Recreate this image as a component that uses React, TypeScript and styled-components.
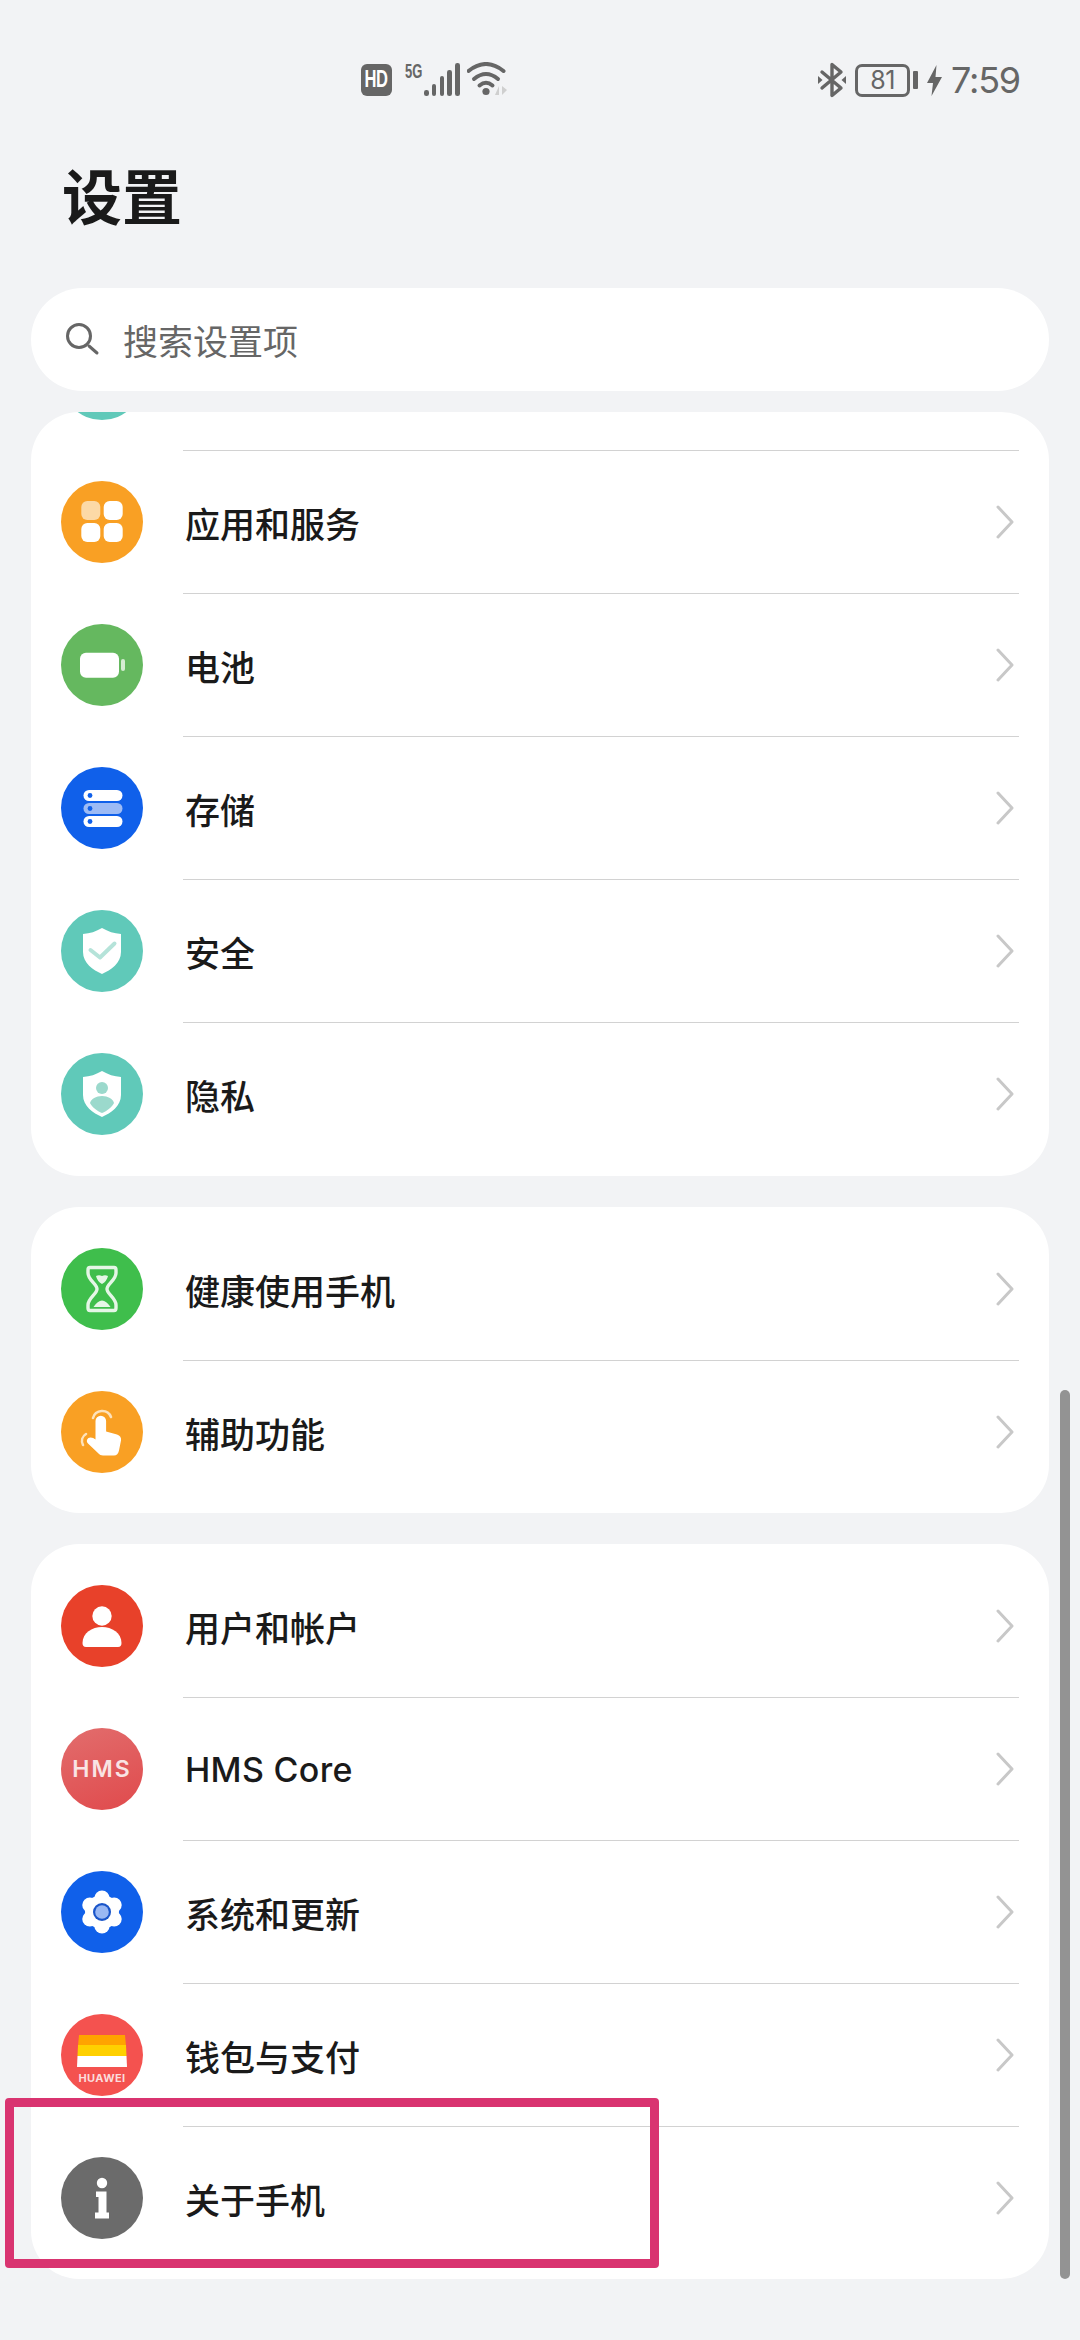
import type { ReactNode } from "react";
import styled, { createGlobalStyle } from "styled-components";

const GlobalStyle = createGlobalStyle`
  html, body {
    margin: 0;
    padding: 0;
    background: #f2f3f5;
  }
  * {
    box-sizing: border-box;
  }
`;

const FONT = `"Noto Sans CJK SC", "Noto Sans", sans-serif`;
const STATUS_GRAY = "#666666";

const Page = styled.div`
  position: relative;
  width: 1080px;
  height: 2340px;
  padding: 0 31px;
  overflow: hidden;
  background: #f2f3f5;
  font-family: ${FONT};
`;

const StatusBar = styled.div`
  display: flex;
  justify-content: space-between;
  align-items: flex-start;
  height: 98px;
  padding: 62px 29px 0 330px;
`;

const StatusGroup = styled.div`
  display: flex;
  align-items: center;
`;

const HdBadge = styled.div`
  display: flex;
  align-items: center;
  justify-content: center;
  width: 31px;
  height: 32px;
  margin-top: 1px;
  border-radius: 6px;
  background: ${STATUS_GRAY};
  color: #ffffff;
  font: 700 23px "Liberation Sans", sans-serif;
`;

const HdText = styled.span`
  transform: scaleX(0.72);
  letter-spacing: -0.5px;
`;

const NetworkLabel = styled.span`
  display: block;
  align-self: flex-start;
  width: 17px;
  margin: 0 2px 0 13px;
  color: ${STATUS_GRAY};
  font: 700 21px/17px "Liberation Sans", sans-serif;
  transform: scaleX(0.62);
  transform-origin: left center;
  white-space: nowrap;
`;

const SignalBars = styled.div`
  display: flex;
  align-items: flex-end;
  gap: 3.2px;
  height: 33px;
  margin-right: 7px;
`;

const SignalBar = styled.i<{ $height: number }>`
  display: block;
  width: 4.6px;
  height: ${({ $height }) => $height}px;
  border-radius: 2.3px;
  background: ${STATUS_GRAY};
`;

const RightGroup = styled(StatusGroup)`
  gap: 9px;
  height: 36px;
`;

const BatteryWrap = styled.div`
  display: flex;
  align-items: center;
  gap: 3px;
`;

const BatteryBody = styled.div`
  display: flex;
  align-items: center;
  justify-content: center;
  width: 55px;
  height: 33px;
  border: 3px solid ${STATUS_GRAY};
  border-radius: 7px;
  color: ${STATUS_GRAY};
  font: 400 25px/1 "Inter", sans-serif;
  letter-spacing: -0.5px;
`;

const BatteryNub = styled.i`
  display: block;
  width: 5px;
  height: 18px;
  border-radius: 1px;
  background: ${STATUS_GRAY};
`;

const Clock = styled.span`
  color: ${STATUS_GRAY};
  font: 400 36px/36px "Inter", sans-serif;
  letter-spacing: -1.2px;
`;

const Title = styled.h1`
  margin: 56px 0 54px;
  padding-left: 31px;
  color: #1a1a1a;
  font-size: 60px;
  font-weight: 700;
  line-height: 80px;
`;

const SearchBar = styled.div`
  display: flex;
  align-items: center;
  gap: 22px;
  height: 103px;
  padding-left: 34px;
  border-radius: 52px;
  background: #ffffff;
  color: #666666;
  font-size: 35px;
  line-height: 100px;
`;

const CardList = styled.div`
  display: flex;
  flex-direction: column;
  gap: 31px;
  margin-top: 21px;
`;

const Card = styled.section`
  padding: 11px 0 9px;
  border-radius: 48px;
  background: #ffffff;
  overflow: hidden;
`;

const ScrolledCard = styled(Card)`
  padding: 0 0 10px;
`;

const Row = styled.div`
  display: flex;
  height: 143px;
  padding: 0 30px;
`;

const ScrolledOffRow = styled(Row)`
  margin-top: -104px;
`;

const RowBody = styled.div<{ $last?: boolean }>`
  flex: 1;
  display: flex;
  align-items: center;
  justify-content: space-between;
  margin-left: 40px;
  padding: 0 5px 0 2px;
  border-bottom: 1px solid ${({ $last }) => ($last ? "transparent" : "#d2d2d2")};
`;

const RowLabel = styled.span`
  color: #1a1a1a;
  font-size: 35px;
  font-weight: 500;
`;

const LatinLabel = styled(RowLabel)`
  font-family: "Inter", sans-serif;
  font-size: 34px;
  letter-spacing: 0.3px;
`;

const IconCircle = styled.div<{ $bg: string }>`
  flex: none;
  display: flex;
  align-items: center;
  justify-content: center;
  align-self: center;
  width: 82px;
  height: 82px;
  margin-top: -1px;
  border-radius: 50%;
  background: ${({ $bg }) => $bg};
  overflow: hidden;
`;

const HmsMark = styled.span`
  color: #f9e4e4;
  font: 600 23px "Inter", sans-serif;
  letter-spacing: 2px;
`;

const ScrollThumb = styled.div`
  position: absolute;
  left: 1060px;
  top: 1390px;
  width: 10px;
  height: 889px;
  border-radius: 5px;
  background: #939393;
`;

const Highlight = styled.div`
  position: absolute;
  left: 5px;
  top: 2098px;
  width: 654px;
  height: 170px;
  border: 9.5px solid #d93470;
  border-radius: 4px;
`;

const Chevron = () => (
  <svg width="18" height="34" viewBox="0 0 18 34" fill="none">
    <path d="M2 2 L16 17 L2 32" stroke="#c8c8c8" strokeWidth="3" strokeLinecap="round" strokeLinejoin="round" />
  </svg>
);

const Glyph = ({ children }: { children: ReactNode }) => (
  <svg width="82" height="82" viewBox="0 0 82 82" fill="none">
    {children}
  </svg>
);

const shieldPath =
  "M41 18 C47 21.5 53 23.5 60 24 V42 C60 53 50 60 41 64 C32 60 22 53 22 42 V24 C29 23.5 35 21.5 41 18 Z";

const gearLobes = [0, 60, 120, 180, 240, 300];

const icons: Record<string, ReactNode> = {
  apps: (
    <Glyph>
      <rect x="20.3" y="20" width="19" height="19" rx="6" fill="#fcd9a6" />
      <rect x="42.7" y="20" width="19" height="19" rx="6" fill="#fff" />
      <rect x="20.3" y="42" width="19" height="19" rx="6" fill="#fff" />
      <rect x="42.7" y="42" width="19" height="19" rx="6" fill="#fff" />
    </Glyph>
  ),
  battery: (
    <Glyph>
      <rect x="19" y="28.7" width="39" height="25" rx="6" fill="#fff" />
      <rect x="60" y="35" width="4" height="12" rx="2" fill="#d5ecd2" />
    </Glyph>
  ),
  storage: (
    <Glyph>
      <rect x="22.5" y="23" width="39" height="11" rx="5.5" fill="#fff" />
      <rect x="22.5" y="36" width="39" height="11" rx="5.5" fill="#9dbbf5" />
      <rect x="22.5" y="49" width="39" height="11" rx="5.5" fill="#fff" />
      <circle cx="29" cy="28.5" r="2.4" fill="#1060ea" />
      <circle cx="29" cy="41.5" r="2.4" fill="#1060ea" />
      <circle cx="29" cy="54.5" r="2.4" fill="#1060ea" />
    </Glyph>
  ),
  security: (
    <Glyph>
      <path d={shieldPath} fill="#fff" />
      <path d="M29.5 40 L39 47.5 L53.5 33.5" stroke="#b5e3d9" strokeWidth="4" strokeLinecap="round" strokeLinejoin="round" />
    </Glyph>
  ),
  privacy: (
    <Glyph>
      <path d={shieldPath} fill="#fff" />
      <circle cx="41" cy="35" r="6" fill="#9bd9cc" />
      <path d="M41 43 C35 43 30 46 29 50 C31 54 36 58 41 60 C46 58 51 54 53 50 C52 46 47 43 41 43 Z" fill="#9bd9cc" />
    </Glyph>
  ),
  hourglass: (
    <Glyph>
      <path
        d="M29 19.5 H53 Q55 19.5 55 22 V25 C55 32 46 36 46 41 C46 46 55 50 55 57 V60 Q55 62.5 53 62.5 H29 Q27 62.5 27 60 V57 C27 50 36 46 36 41 C36 36 27 32 27 25 V22 Q27 19.5 29 19.5 Z"
        stroke="#e5f6e6"
        strokeWidth="3.4"
      />
      <path d="M35 28 Q38 26.5 41 28 Q44 26.5 47 28 Q46 33 41 36 Q36 33 35 28 Z" fill="#e5f6e6" />
      <path d="M32.5 59 Q41 46 49.5 59 Z" fill="#e5f6e6" />
    </Glyph>
  ),
  touch: (
    <Glyph>
      <path
        d="M34.5 30 a5.3 5.3 0 0 1 10.6 0 V40.5 L56 43.5 c3 1 4.5 3 4 6 l-2 10 c-.5 3 -2.5 5 -5 5 H42 c-2 0 -3.5 -1 -4.5 -2 L27 52.5 c-2.5 -2.5 -.5 -6 2.5 -6 c2 0 3.5 .8 5 2 Z"
        fill="#fff"
      />
      <path d="M32 27 a9.5 9.5 0 0 1 18 -1" stroke="#fde2bb" strokeWidth="2.6" strokeLinecap="round" />
      <path d="M25 43 c-4 2.5 -5 7 -3 11" stroke="#fde2bb" strokeWidth="2.6" strokeLinecap="round" />
    </Glyph>
  ),
  user: (
    <Glyph>
      <circle cx="41" cy="31" r="9.7" fill="#fff" />
      <path d="M21.5 58 C21.5 48 31 42 41 42 C51 42 60.5 48 60.5 58 Q60.5 62 57 62 H25 Q21.5 62 21.5 58 Z" fill="#fff" />
    </Glyph>
  ),
  hms: <HmsMark>HMS</HmsMark>,
  gear: (
    <Glyph>
      {gearLobes.map((deg) => (
        <circle
          key={deg}
          cx={41 + 14 * Math.sin((deg * Math.PI) / 180)}
          cy={41 - 14 * Math.cos((deg * Math.PI) / 180)}
          r="7.6"
          fill="#fff"
        />
      ))}
      <circle cx="41" cy="41" r="17" fill="#fff" />
      <circle cx="41" cy="41" r="9" fill="#1a55c9" />
      <circle cx="41" cy="41" r="6.8" fill="#9ab8f3" />
    </Glyph>
  ),
  wallet: (
    <Glyph>
      <path d="M18 21 H64 L65 32 H17 Z" fill="#ffa300" />
      <path d="M17 31 H65 L65.5 42 H16.5 Z" fill="#ffd000" />
      <path d="M16.5 42 H65.5 L66 53 H16 Z" fill="#fff" />
      <text
        x="41"
        y="68"
        textAnchor="middle"
        fill="#fbdcdc"
        fontFamily="Inter, sans-serif"
        fontSize="11"
        fontWeight="700"
        letterSpacing="0.4"
      >
        HUAWEI
      </text>
    </Glyph>
  ),
  info: (
    <Glyph>
      <circle cx="41" cy="26" r="5.2" fill="#fff" />
      <path d="M35 34.5 H45.5 V55.5 H48 V61.5 H34 V55.5 H37.5 V40 H35 Z" fill="#fff" />
    </Glyph>
  ),
};

type Item = { label: string; icon: string; bg: string; latin?: boolean };

const firstCard: Item[] = [
  { label: "应用和服务", icon: "apps", bg: "#f9a024" },
  { label: "电池", icon: "battery", bg: "#65b85f" },
  { label: "存储", icon: "storage", bg: "#1060ea" },
  { label: "安全", icon: "security", bg: "#60c9b9" },
  { label: "隐私", icon: "privacy", bg: "#60c9b9" },
];

const secondCard: Item[] = [
  { label: "健康使用手机", icon: "hourglass", bg: "#3fbe4c" },
  { label: "辅助功能", icon: "touch", bg: "#f9a024" },
];

const thirdCard: Item[] = [
  { label: "用户和帐户", icon: "user", bg: "#e8412a" },
  { label: "HMS Core", icon: "hms", bg: "linear-gradient(160deg, #e26d6d, #e04a4c)", latin: true },
  { label: "系统和更新", icon: "gear", bg: "#1060ea" },
  { label: "钱包与支付", icon: "wallet", bg: "#f4524f" },
  { label: "关于手机", icon: "info", bg: "#6b6b6b" },
];

const SettingsRows = ({ items }: { items: Item[] }) => (
  <>
    {items.map((item, i) => (
      <Row key={item.label}>
        <IconCircle $bg={item.bg}>{icons[item.icon]}</IconCircle>
        <RowBody $last={i === items.length - 1}>
          {item.latin ? <LatinLabel>{item.label}</LatinLabel> : <RowLabel>{item.label}</RowLabel>}
          <Chevron />
        </RowBody>
      </Row>
    ))}
  </>
);

export default function App() {
  return (
    <Page>
      <GlobalStyle />
      <StatusBar>
        <StatusGroup>
          <HdBadge>
            <HdText>HD</HdText>
          </HdBadge>
          <NetworkLabel>5G</NetworkLabel>
          <SignalBars>
            {[6, 12, 20, 26, 33].map((h) => (
              <SignalBar key={h} $height={h} />
            ))}
          </SignalBars>
          <svg width="42" height="34" viewBox="0 0 42 34" fill="none">
            <path d="M1.5 9 Q19 -5 36.5 9" stroke={STATUS_GRAY} strokeWidth="4" strokeLinecap="round" />
            <path d="M7 17 Q19 7 31 17" stroke={STATUS_GRAY} strokeWidth="4" strokeLinecap="round" />
            <path d="M12.5 23.5 Q19 18 25.5 23.5" stroke={STATUS_GRAY} strokeWidth="4" strokeLinecap="round" />
            <circle cx="19" cy="29.5" r="3.6" fill={STATUS_GRAY} />
            <path d="M32 24 V33 L28 33 Z" fill="#cfcfcf" />
            <path d="M35 24 V33 L40 28 Z" fill="#cfcfcf" />
          </svg>
        </StatusGroup>
        <RightGroup>
          <svg width="28" height="36" viewBox="0 0 28 36" fill="none">
            <path
              d="M4 10 L23 26 L14 33.5 V2.5 L23 10 L4 26"
              stroke={STATUS_GRAY}
              strokeWidth="3.4"
              strokeLinecap="round"
              strokeLinejoin="round"
            />
            <path d="M0 14 L4.5 18 L0 22 Z" fill={STATUS_GRAY} />
            <path d="M28 14 L23.5 18 L28 22 Z" fill={STATUS_GRAY} />
          </svg>
          <BatteryWrap>
            <BatteryBody>81</BatteryBody>
            <BatteryNub />
          </BatteryWrap>
          <svg width="15" height="31" viewBox="0 0 15 31" fill="none">
            <path d="M9.5 0 L0 18 H6 L4.5 31 L15 12 H8.5 Z" fill={STATUS_GRAY} />
          </svg>
          <Clock>7:59</Clock>
        </RightGroup>
      </StatusBar>

      <Title>设置</Title>

      <SearchBar>
        <svg width="36" height="36" viewBox="0 0 36 36" fill="none">
          <circle cx="14" cy="14" r="11.5" stroke="#666666" strokeWidth="3" />
          <path d="M24 24 L32 31" stroke="#666666" strokeWidth="3" strokeLinecap="round" />
        </svg>
        搜索设置项
      </SearchBar>

      <CardList>
        <ScrolledCard>
          <ScrolledOffRow>
            <IconCircle $bg="#60c9b9" />
            <RowBody />
          </ScrolledOffRow>
          <SettingsRows items={firstCard} />
        </ScrolledCard>
        <Card>
          <SettingsRows items={secondCard} />
        </Card>
        <Card>
          <SettingsRows items={thirdCard} />
        </Card>
      </CardList>

      <ScrollThumb />
      <Highlight />
    </Page>
  );
}
